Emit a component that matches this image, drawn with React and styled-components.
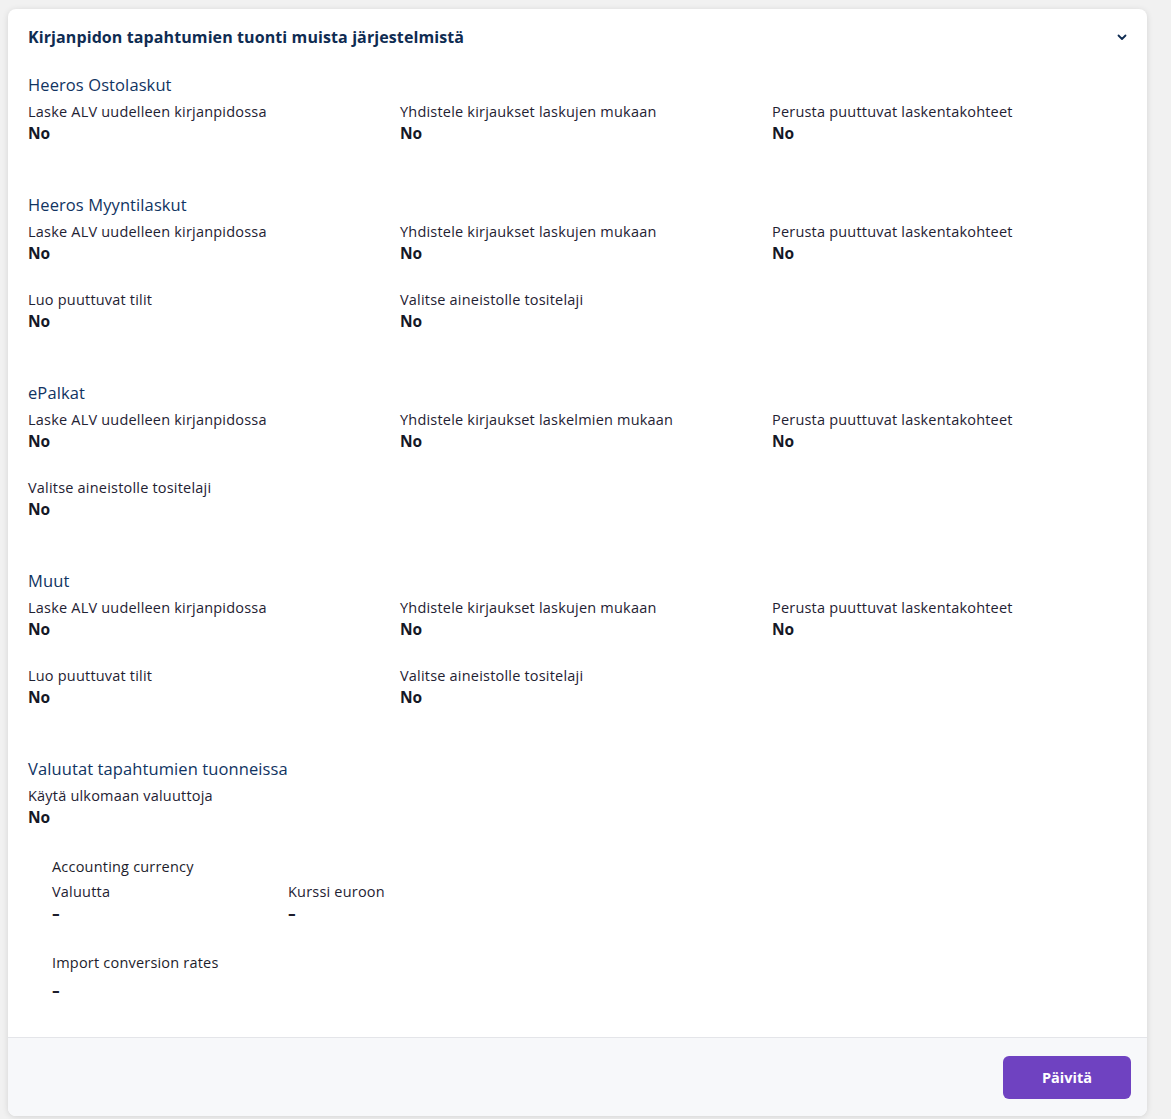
import React from 'react';
import styled, {createGlobalStyle} from 'styled-components';

const GlobalStyle = createGlobalStyle`
    body {
        margin: 0;
        background: #f1f1f1;
        font-family: "Open Sans", "Liberation Sans", sans-serif;
        color: #1d1d2c;
    }
`

const Page = styled.div`
    padding: 9px 24px 3px 8px;
`
const Card = styled.div`
    background: #fff;
    border-radius: 8px;
    box-shadow: 0 1px 6px rgba(0, 0, 0, 0.12);
    overflow: hidden;
`
const Header = styled.div`
    display: flex;
    align-items: center;
    justify-content: space-between;
    padding: 16px 20px 0 20px;
    height: 40px;
    box-sizing: border-box;
`
const Title = styled.h2`
    margin: 0;
    font-size: 16px;
    font-weight: 700;
    color: #0f2c52;
    letter-spacing: 0.1px;
`
const Body = styled.div`
    padding: 24px 20px 36px 20px;
`
const Section = styled.div`
    margin-bottom: 49px;
`
const SectionTitle = styled.h3`
    margin: 0 0 5px 0;
    font-size: 16.5px;
    font-weight: 400;
    color: #113462;
    line-height: 24px;
    letter-spacing: 0.1px;
`
const Grid = styled.div`
    display: grid;
    grid-template-columns: repeat(3, 372px);
    row-gap: 26px;
`
const Field = styled.div`
    display: flex;
    flex-direction: column;
`
const Label = styled.div`
    font-size: 14.5px;
    line-height: 20px;
    letter-spacing: 0.2px;
    color: #1f2233;
    white-space: nowrap;
`
const Value = styled.div`
    font-size: 15.5px;
    font-weight: 700;
    line-height: 22px;
    color: #151826;
`
const Sub = styled.div`
    padding-left: 24px;
    margin-top: 29px;
`
const SubTitle = styled.div`
    font-size: 14.5px;
    line-height: 20px;
    letter-spacing: 0.2px;
    margin: ${p => p.top || 0}px 0 5px 0;
`
const SubGrid = styled.div`
    display: grid;
    grid-template-columns: 236px 236px;
`
const Dash = styled.div`
    font-size: 16px;
    font-weight: 700;
    line-height: 22px;
    transform: scaleX(1.5);
    transform-origin: left center;
    margin-top: ${p => p.gap || 0}px;
`
const Footer = styled.div`
    background: #f7f8fa;
    border-top: 1px solid #e4e5e9;
    display: flex;
    justify-content: flex-end;
    padding: 18px 16px 17px 0;
`
const Button = styled.button`
    width: 128px;
    height: 43px;
    border: none;
    border-radius: 6px;
    background: #6f42c1;
    color: #fff;
    font-family: inherit;
    font-size: 14.5px;
    font-weight: 700;
    cursor: pointer;
`

const Chevron = () => (
    <svg width="10" height="7" viewBox="0 0 10 7">
        <path d="M1.5 1.5 L5 5 L8.5 1.5" fill="none" stroke="#0f2c52" strokeWidth="1.8" strokeLinecap="round" strokeLinejoin="round"/>
    </svg>
)

const sections = [
    {
        title: 'Heeros Ostolaskut',
        fields: ['Laske ALV uudelleen kirjanpidossa', 'Yhdistele kirjaukset laskujen mukaan', 'Perusta puuttuvat laskentakohteet']
    },
    {
        title: 'Heeros Myyntilaskut',
        fields: ['Laske ALV uudelleen kirjanpidossa', 'Yhdistele kirjaukset laskujen mukaan', 'Perusta puuttuvat laskentakohteet', 'Luo puuttuvat tilit', 'Valitse aineistolle tositelaji']
    },
    {
        title: 'ePalkat',
        fields: ['Laske ALV uudelleen kirjanpidossa', 'Yhdistele kirjaukset laskelmien mukaan', 'Perusta puuttuvat laskentakohteet', 'Valitse aineistolle tositelaji']
    },
    {
        title: 'Muut',
        fields: ['Laske ALV uudelleen kirjanpidossa', 'Yhdistele kirjaukset laskujen mukaan', 'Perusta puuttuvat laskentakohteet', 'Luo puuttuvat tilit', 'Valitse aineistolle tositelaji']
    }
]

export default function App() {
    return (
        <Page>
            <GlobalStyle/>
            <Card>
                <Header>
                    <Title>Kirjanpidon tapahtumien tuonti muista järjestelmistä</Title>
                    <Chevron/>
                </Header>
                <Body>
                    {sections.map(s => (
                        <Section key={s.title}>
                            <SectionTitle>{s.title}</SectionTitle>
                            <Grid>
                                {s.fields.map(f => (
                                    <Field key={f}>
                                        <Label>{f}</Label>
                                        <Value>No</Value>
                                    </Field>
                                ))}
                            </Grid>
                        </Section>
                    ))}
                    <div>
                        <SectionTitle>Valuutat tapahtumien tuonneissa</SectionTitle>
                        <Field>
                            <Label>Käytä ulkomaan valuuttoja</Label>
                            <Value>No</Value>
                        </Field>
                        <Sub>
                            <SubTitle>Accounting currency</SubTitle>
                            <SubGrid>
                                <Field>
                                    <Label>Valuutta</Label>
                                    <Dash>-</Dash>
                                </Field>
                                <Field>
                                    <Label>Kurssi euroon</Label>
                                    <Dash>-</Dash>
                                </Field>
                            </SubGrid>
                            <SubTitle top={29}>Import conversion rates</SubTitle>
                            <Dash gap={6}>-</Dash>
                        </Sub>
                    </div>
                </Body>
                <Footer>
                    <Button>Päivitä</Button>
                </Footer>
            </Card>
        </Page>
    );
}
